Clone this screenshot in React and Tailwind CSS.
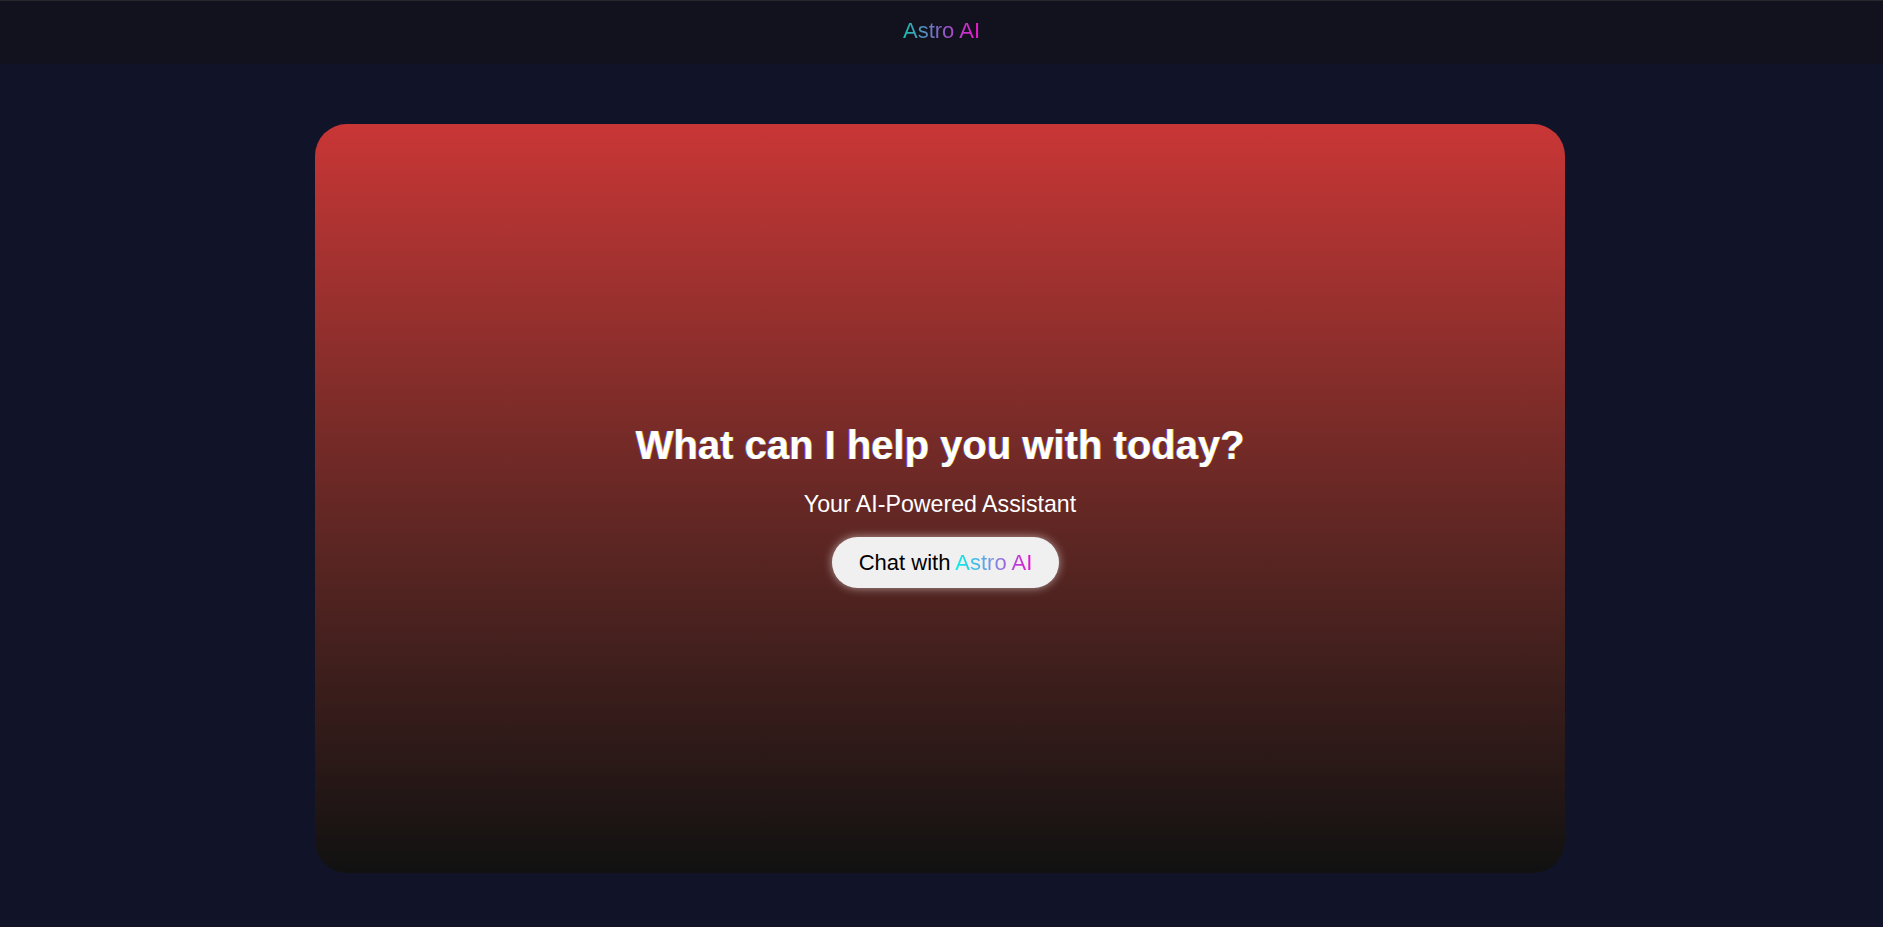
import React from 'react';

function GradientName({ className }) {
  return (
    <span className={`bg-clip-text text-transparent bg-linear-to-r/srgb ${className}`}>
      Astro AI
    </span>
  );
}

function App() {
  return (
    <div className="flex flex-col h-screen bg-[#111428] font-['Liberation_Sans',Arial,sans-serif]">
      {/* Top bar */}
      <header className="h-16 flex items-center justify-center bg-[#12121f] border-t border-[#26262c]">
        <h2 className="text-[22px] leading-none -mt-1">
          <GradientName className="from-[#18c2ae] via-[#8a5fc8] to-[#f014cc]" />
        </h2>
      </header>

      {/* Hero card */}
      <main className="flex-1 flex justify-center pt-[60px] pb-[54px]">
        <section className="w-[1250px] ml-[-3px] rounded-[32px] bg-gradient-to-b from-[#c93636] to-[#111111] flex flex-col items-center justify-center pt-3">
          <h1 className="text-[40px] leading-[46px] font-bold text-white [text-shadow:0.6px_0_0_#e0b020,-0.6px_0_0_#4060ff]">
            What can I help you with today?
          </h1>
          <p className="mt-[23px] text-[23.2px] leading-[27px] text-white">
            Your AI-Powered Assistant
          </p>
          <button className="mt-[19px] ml-[11px] h-[51px] px-[27px] rounded-full bg-[#f0f0f0] text-[22px] text-black shadow-[0_0_10px_rgba(255,255,255,0.55)]">
            Chat with <GradientName className="from-[#00f2e6] via-[#7c8ce4] to-[#ec08cc]" />
          </button>
        </section>
      </main>
    </div>
  );
}

export default App;
